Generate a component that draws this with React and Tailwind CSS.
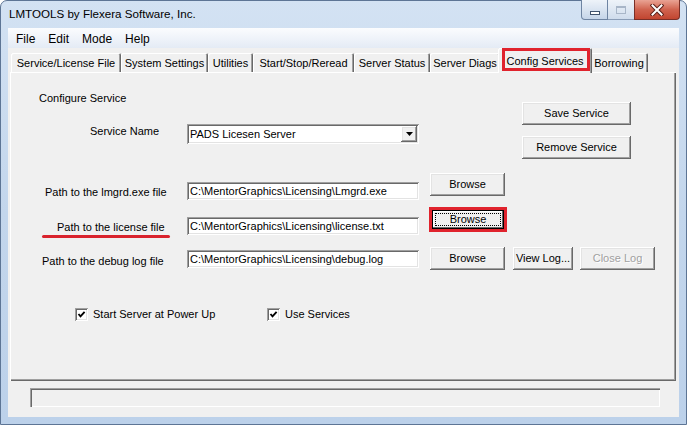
const raised =
  "bg-[#f0f0f0] shadow-[inset_-1px_-1px_0_#696969,inset_1px_1px_0_#ffffff,inset_-2px_-2px_0_#a0a0a0,inset_2px_2px_0_#e3e3e3]";
const sunken =
  "bg-white shadow-[inset_1px_1px_0_#a0a0a0,inset_-1px_-1px_0_#ffffff,inset_2px_2px_0_#696969,inset_-2px_-2px_0_#e3e3e3]";

const tabs = [
  { label: "Service/License File", w: "w-[110px]" },
  { label: "System Settings", w: "w-[87px]" },
  { label: "Utilities", w: "w-[45px]" },
  { label: "Start/Stop/Reread", w: "w-[101px]" },
  { label: "Server Status", w: "w-[76px]" },
  { label: "Server Diags", w: "w-[70px]" },
  { label: "Config Services", w: "w-[94px]", active: true },
  { label: "Borrowing", w: "w-[58px]" },
];

function Button({ children, className = "", disabled }) {
  return (
    <div
      className={`${raised} flex items-center justify-center text-[11px] leading-[13px] ${
        disabled ? "text-[#a0a0a0] [text-shadow:1px_1px_0_#ffffff]" : "text-black"
      } ${className}`}
    >
      {children}
    </div>
  );
}

function TextBox({ value }) {
  return (
    <div className={`${sunken} w-[232px] h-[18px] flex items-center pl-[3px] text-[11px] leading-[13px] text-black`}>
      {value}
    </div>
  );
}

function CheckBox({ label, className = "" }) {
  return (
    <div className={`flex items-center ${className}`}>
      <div className={`${sunken} w-[13px] h-[13px] flex items-center justify-center`}>
        <svg width="13" height="13" viewBox="0 0 13 13">
          <path d="M3.5 6 L5.5 8.3 L9.6 3.9" fill="none" stroke="#000" strokeWidth="1.9" />
        </svg>
      </div>
      <span className="ml-[5px] text-[11px] leading-[13px]">{label}</span>
    </div>
  );
}

function CaptionButtons() {
  return (
    <div className="ml-auto mr-[6px] -mt-px flex h-[20px]">
      {/* minimize */}
      <div className="w-[27px] h-full border border-[#6e84a2] border-t-0 rounded-bl-[4px] bg-gradient-to-b from-[#eef3f9] to-[#c5d5e9] flex items-end justify-center pb-[4px]">
        <div className="w-[10px] h-[4px] bg-white border border-[#40536d]" />
      </div>
      {/* maximize (disabled) */}
      <div className="w-[26px] h-full border-y border-[#8a9db7] border-t-0 bg-gradient-to-b from-[#eef3f9] to-[#cfdcec] flex items-center justify-center">
        <div className="w-[10px] h-[8px] border border-[#a8b6c8] shadow-[inset_0_1px_0_#a8b6c8]" />
      </div>
      {/* close */}
      <div className="w-[46px] h-full border border-[#7a2f27] border-t-0 rounded-br-[4px] bg-gradient-to-b from-[#e9a394] via-[#d0634f] to-[#c24530] flex items-center justify-center">
        <svg width="14" height="12" viewBox="0 0 14 12">
          <path d="M2.5 1.5 L11.5 10.5 M11.5 1.5 L2.5 10.5" stroke="#5b2019" strokeWidth="4" strokeLinecap="square" />
          <path d="M2.5 1.5 L11.5 10.5 M11.5 1.5 L2.5 10.5" stroke="#ffffff" strokeWidth="2" strokeLinecap="square" />
        </svg>
      </div>
    </div>
  );
}

export default function App() {
  return (
    <div className="w-[687px] h-[425px] overflow-hidden font-['Liberation_Sans',Arial,sans-serif] text-black">
      <div className="w-full h-full flex flex-col border border-[#5d7595] rounded-t-[7px] bg-gradient-to-b from-[#d3e2f3] via-[#c3d6ec] to-[#bcd1ea]">
        {/* Title bar */}
        <div className="h-[27px] flex items-start shrink-0">
          <span className="pl-[8px] pt-[6px] text-[11.6px] leading-[14px] text-black">
            LMTOOLS by Flexera Software, Inc.
          </span>
          <CaptionButtons />
        </div>

        {/* Client area */}
        <div className="mx-[7px] mb-[7px] flex-1 bg-[#f0f0f0] flex flex-col">
          {/* Menu */}
          <div className="h-[20px] shrink-0 bg-gradient-to-b from-[#fbfcfe] to-[#e4ebf5] flex items-center pl-[8px] pt-[1px] gap-[13px] text-[12px] leading-[14px]">
            <span>File</span>
            <span>Edit</span>
            <span>Mode</span>
            <span>Help</span>
          </div>

          {/* Tab strip */}
          <div className="h-[24px] shrink-0 flex items-end pl-[3px]">
            {tabs.map((t) =>
              t.active ? (
                <div
                  key={t.label}
                  className={`${t.w} relative z-10 -mx-[2px] -mb-px h-[25px] bg-[#f0f0f0] rounded-t-[2px] shadow-[inset_1px_1px_0_#ffffff,inset_-1px_0_0_#696969,inset_-2px_0_0_#a0a0a0] flex justify-center pt-[7px] text-[11px] leading-[13px]`}
                >
                  {t.label}
                  <div className="absolute left-[4px] right-[2px] top-0 bottom-[2px] border-[3px] border-[#e0232d]" />
                </div>
              ) : (
                <div
                  key={t.label}
                  className={`${t.w} h-[19px] bg-[#f0f0f0] rounded-t-[2px] shadow-[inset_1px_1px_0_#ffffff,inset_-1px_0_0_#696969,inset_-2px_0_0_#a0a0a0] flex items-center justify-center pt-[1px] text-[11px] leading-[13px]`}
                >
                  {t.label}
                </div>
              )
            )}
          </div>

          {/* Panel */}
          <div className="ml-[2px] w-[666px] h-[309px] shrink-0 shadow-[inset_1px_1px_0_#ffffff,inset_-1px_-1px_0_#696969,inset_-2px_-2px_0_#a0a0a0] text-[11px] leading-[13px]">
            {/* Top section */}
            <div className="flex pt-[20px]">
              <div className="w-[512px]">
                <div className="pl-[29px]">Configure Service</div>
                <div className="flex items-start mt-[19px]">
                  <div className="w-[177px] pl-[80px] mt-[1px]">Service Name</div>
                  <div className={`${sunken} w-[232px] h-[20px] flex items-center justify-between pl-[3px] pr-[2px]`}>
                    <span>PADS Licesen Server</span>
                    <div className={`${raised} w-[16px] h-[16px] flex items-center justify-center`}>
                      <svg width="7" height="4" viewBox="0 0 7 4">
                        <path d="M0 0 H7 L3.5 4 Z" fill="#000" />
                      </svg>
                    </div>
                  </div>
                </div>
              </div>
              <div className="flex flex-col">
                <Button className="w-[109px] h-[23px] mt-[10px]">Save Service</Button>
                <Button className="w-[109px] h-[23px] mt-[11px]">Remove Service</Button>
              </div>
            </div>

            {/* Path rows */}
            <div className="mt-[14px] flex flex-col">
              <div className="h-[34px] flex items-start">
                <div className="w-[177px] pl-[35px] mt-[13px]">Path to the lmgrd.exe file</div>
                <div className="mt-[9px]">
                  <TextBox value="C:\MentorGraphics\Licensing\Lmgrd.exe" />
                </div>
                <Button className="ml-[11px] w-[75px] h-[23px]">Browse</Button>
              </div>

              <div className="h-[40px] flex items-start">
                <div className="w-[177px] mt-[14px]">
                  <div className="pl-[47px]">Path to the license file</div>
                  <div className="ml-[32px] mt-[1px] w-[128px] h-[3px] rounded-full bg-[#d9232d]" />
                </div>
                <div className="mt-[10px]">
                  <TextBox value="C:\MentorGraphics\Licensing\license.txt" />
                </div>
                <div className="ml-[10px] w-[78px] h-[25px] border-[3px] border-[#e0232d]">
                  <div className="relative w-full h-full border border-black bg-[#f0f0f0] shadow-[inset_-1px_-1px_0_#696969,inset_1px_1px_0_#ffffff] flex items-center justify-center">
                    Browse
                    <div className="absolute inset-[2px] border border-dotted border-black" />
                  </div>
                </div>
              </div>

              <div className="h-[23px] flex items-start">
                <div className="w-[177px] pl-[32px] mt-[8px]">Path to the debug log file</div>
                <div className="mt-[3px]">
                  <TextBox value="C:\MentorGraphics\Licensing\debug.log" />
                </div>
                <Button className="ml-[11px] w-[75px] h-[23px]">Browse</Button>
                <Button className="ml-[8px] w-[60px] h-[23px]">View Log...</Button>
                <Button className="ml-[7px] w-[75px] h-[23px]" disabled>
                  Close Log
                </Button>
              </div>
            </div>

            {/* Checkboxes */}
            <div className="mt-[38px] flex pl-[65px]">
              <CheckBox label="Start Server at Power Up" className="w-[192px]" />
              <CheckBox label="Use Services" />
            </div>
          </div>

          {/* Status bar */}
          <div className="mt-[7px] ml-[22px] w-[630px] h-[19px] shrink-0 bg-[#f0f0f0] shadow-[inset_1px_1px_0_#a0a0a0,inset_2px_2px_0_#696969,inset_-1px_-1px_0_#ffffff]" />
        </div>
      </div>
    </div>
  );
}
